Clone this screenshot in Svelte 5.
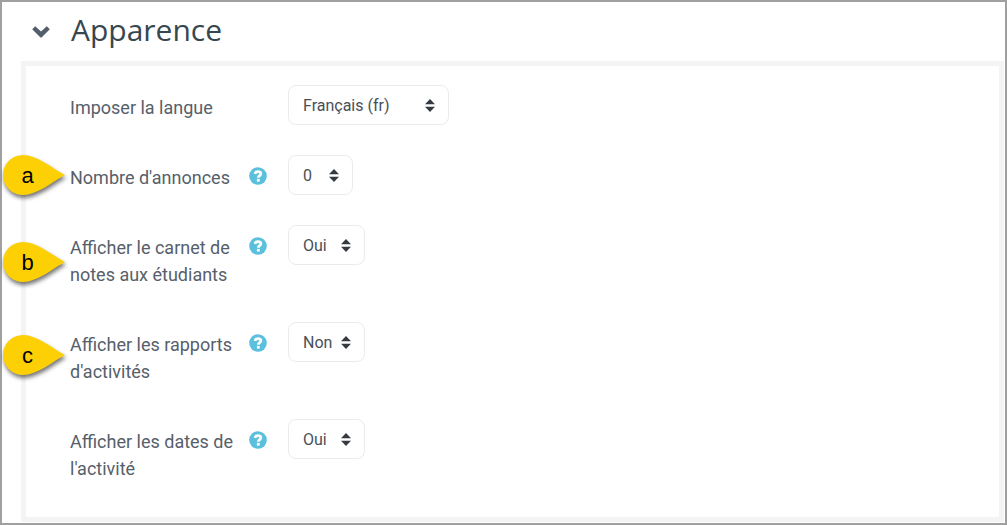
<script>
  const yesNo = ['Oui', 'Non'];
  const rows = [
    { id: 'lang', label: 'Imposer la langue', options: ['Ne pas imposer', 'Français (fr)'], value: 'Français (fr)', wide: true },
    { id: 'news', label: "Nombre d'annonces", help: true, options: ['0', '1', '2', '3', '4', '5', '6', '7', '8', '9', '10'], value: '0', pin: 'a' },
    { id: 'grades', label: 'Afficher le carnet de notes aux étudiants', help: true, options: yesNo, value: 'Oui', pin: 'b' },
    { id: 'reports', label: "Afficher les rapports d'activités", help: true, options: yesNo, value: 'Non', pin: 'c' },
    { id: 'dates', label: "Afficher les dates de l'activité", help: true, options: yesNo, value: 'Oui' }
  ];
  let open = $state(true);
</script>

<main>
  <h2>
    <button class="toggle" aria-expanded={open} aria-label="Apparence" onclick={() => (open = !open)}>
      <svg viewBox="0 0 18 12" width="18" height="12" aria-hidden="true">
        <path d="M0.2 3.2 L3.2 0.3 L9 5.5 L14.8 0.3 L17.8 3.2 L9.5 11.5 H8.5 Z" fill="#525f6b" />
      </svg>
    </button>
    <span>Apparence</span>
  </h2>

  {#if open}
    <form class="panel">
      {#each rows as row (row.id)}
        <div class="row">
          <label for={row.id}>{row.label}</label>
          <div class="help">
            {#if row.help}
              <button type="button" aria-label="Aide">
                <svg viewBox="0 0 18 18" width="18" height="18" aria-hidden="true">
                  <circle cx="9" cy="9" r="8.8" fill="#5bc0de" />
                  <path d="M6 6.9 C6.4 5.2 7.5 4.6 9 4.6 C10.7 4.6 11.9 5.5 11.9 6.8 C11.9 8.7 9.3 8.5 9.3 10.8" fill="none" stroke="#fff" stroke-width="2.7" />
                  <rect x="7.9" y="11.9" width="2.8" height="2.7" fill="#fff" />
                </svg>
              </button>
            {/if}
          </div>
          <div class="field">
            <select id={row.id} class:wide={row.wide} value={row.value}>
              {#each row.options as option}
                <option value={option}>{option}</option>
              {/each}
            </select>
            <svg class="arrows" viewBox="0 0 10 13" width="10" height="13" aria-hidden="true">
              <path d="M5 0 L10 5.3 H0 Z M0 7.7 H10 L5 13 Z" fill="#343a40" />
            </svg>
          </div>
          {#if row.pin}
            <div class="pin {row.pin}">
              <svg viewBox="0 0 63 40" width="63" height="40" aria-hidden="true">
                <path d="M62 20 C49 13 34 0 20 0 A20 20 0 0 0 20 40 C34 40 49 27 62 20 Z" fill="#fdd005" />
              </svg>
              <span>{row.pin}</span>
            </div>
          {/if}
        </div>
      {/each}
    </form>
  {/if}
</main>

<style>
  :global(body) { background: #fff; }
  main {
    box-sizing: border-box;
    display: flex;
    flex-direction: column;
    min-height: 100vh;
    border: 2px solid #a0a0a0;
    padding: 0 1px 1px 19px;
    font-family: Roboto, sans-serif;
    color: #56606a;
  }
  h2 {
    display: flex;
    align-items: center;
    height: 59px;
    margin: 0;
    font: 400 30px/40px "Open Sans", sans-serif;
    color: #37474f;
  }
  h2 span { padding-bottom: 4px; }
  button {
    display: flex;
    padding: 0;
    border: 0;
    background: none;
    cursor: pointer;
  }
  .toggle { margin: 0 21px 0 11px; }
  .panel {
    flex: 1;
    border: 5px solid #f4f4f4;
    padding: 19px 44px 0;
  }
  .row {
    position: relative;
    display: grid;
    grid-template-columns: 164px 54px 1fr;
    align-items: start;
    padding-bottom: 30px;
  }
  label {
    padding: 9px 0 4px;
    font-size: 18px;
    line-height: 27px;
  }
  .help { padding: 12px 0 0 15px; }
  .field {
    position: relative;
    justify-self: start;
  }
  select {
    appearance: none;
    box-sizing: border-box;
    display: block;
    height: 40px;
    padding: 0 31px 0 14px;
    border: 1px solid #e9ecef;
    border-radius: 8px;
    background: #fff;
    color: #495057;
    font: 16px Roboto, sans-serif;
  }
  .wide { min-width: 161px; }
  .arrows {
    position: absolute;
    right: 14px;
    top: 14px;
    pointer-events: none;
  }
  .pin {
    position: absolute;
    left: -67px;
    width: 63px;
    height: 40px;
  }
  .pin svg {
    display: block;
    overflow: visible;
    filter: drop-shadow(1px 3px 2px rgb(0 0 0 / 55%));
  }
  .pin span {
    position: absolute;
    inset: 0 14px 0 0;
    text-align: center;
    font: 22px/42px "Liberation Sans", Arial, sans-serif;
    color: #000;
  }
  .a { top: 0; }
  .b { top: 17px; }
  .c { top: 13px; }
</style>
